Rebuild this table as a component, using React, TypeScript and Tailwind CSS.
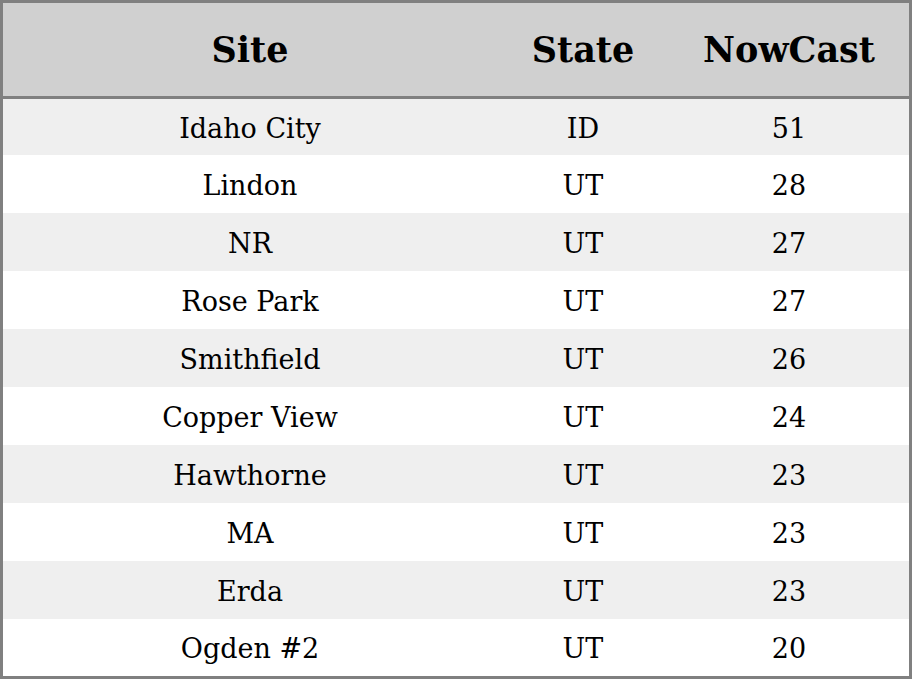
const ROWS: [string, string, number][] = [
  ['Idaho City', 'ID', 51],
  ['Lindon', 'UT', 28],
  ['NR', 'UT', 27],
  ['Rose Park', 'UT', 27],
  ['Smithfield', 'UT', 26],
  ['Copper View', 'UT', 24],
  ['Hawthorne', 'UT', 23],
  ['MA', 'UT', 23],
  ['Erda', 'UT', 23],
  ['Ogden #2', 'UT', 20],
];

export default function App() {
  return (
    <div
      className="w-[912px] h-[679px] border-[3px] border-[#808080] flex flex-col bg-white text-black"
      style={{ fontFamily: '"DejaVu Serif", serif' }}
    >
      <div className="grid grid-cols-[494px_172px_1fr] h-[91px] shrink-0 bg-[#d0d0d0] border-b-[3px] border-[#808080] items-center text-center text-[35px] font-bold box-content pt-[2px]">
        <div>Site</div>
        <div>State</div>
        <div>NowCast</div>
      </div>
      <div className="flex-1 flex flex-col">
        {ROWS.map(([site, state, value], i) => (
          <div
            key={i}
            className={`grid grid-cols-[494px_172px_1fr] items-center text-center text-[27px] pt-[4px] ${
              i === 0 ? 'h-[56px]' : i === ROWS.length - 1 ? 'flex-1' : 'h-[58px]'
            } ${i % 2 === 0 ? 'bg-[#efefef]' : 'bg-white'}`}
          >
            <div>{site}</div>
            <div>{state}</div>
            <div>{value}</div>
          </div>
        ))}
      </div>
    </div>
  );
}
